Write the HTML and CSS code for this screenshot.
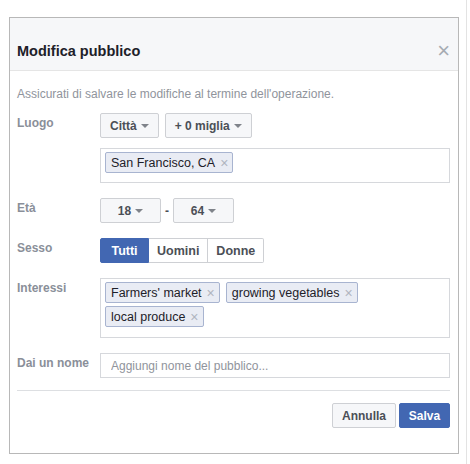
FILE: index.html
```html
<!DOCTYPE html>
<html>
<head>
  <title>Modifica pubblico</title>
  <link rel="stylesheet" href="styles.css">
</head>
<body>
  <div class="page">
  <div class="dialog">
    <div class="dialog-header">
      <h1>Modifica pubblico</h1>
      <span class="close">&times;</span>
    </div>
    <div class="dialog-body">
      <p class="hint">Assicurati di salvare le modifiche al termine dell'operazione.</p>

      <div class="row">
        <label>Luogo</label>
        <div class="controls">
          <div class="inline">
            <button class="btn">Città <span class="caret"></span></button>
            <button class="btn">+ 0 miglia <span class="caret"></span></button>
          </div>
          <div class="token-box loc">
            <span class="token">San Francisco, CA <span class="x">&times;</span></span>
          </div>
        </div>
      </div>

      <div class="row age">
        <label>Età</label>
        <div class="controls inline">
          <button class="btn num">18 <span class="caret"></span></button>
          <span class="dash">-</span>
          <button class="btn num">64 <span class="caret"></span></button>
        </div>
      </div>

      <div class="row sex">
        <label>Sesso</label>
        <div class="controls">
          <div class="segmented">
            <button class="seg active">Tutti</button>
            <button class="seg">Uomini</button>
            <button class="seg">Donne</button>
          </div>
        </div>
      </div>

      <div class="row interests">
        <label>Interessi</label>
        <div class="controls">
          <div class="token-box">
            <span class="token">Farmers' market <span class="x">&times;</span></span>
            <span class="token">growing vegetables <span class="x">&times;</span></span>
            <span class="token">local produce <span class="x">&times;</span></span>
          </div>
        </div>
      </div>

      <div class="row name">
        <label>Dai un nome</label>
        <div class="controls">
          <input type="text" placeholder="Aggiungi nome del pubblico...">
        </div>
      </div>

      <div class="footer">
        <button class="btn cancel">Annulla</button>
        <button class="btn primary">Salva</button>
      </div>
    </div>
  </div>
  </div>
</body>
</html>
```

FILE: styles.css
```css
body {
  margin: 0;
  font-family: "Liberation Sans", Arial, sans-serif;
  color: #1d2129;
  background: #fff;
}

.page {
  width: 467px;
  height: 464px;
  border-right: 1px solid #e3e3e3;
  padding: 17px 0 0 9px;
  box-sizing: border-box;
}

.dialog {
  width: 450px;
  height: 437px;
  box-sizing: border-box;
  border: 1px solid #b8b8b8;
  background: #fff;
}

.dialog-header {
  height: 53px;
  background: #f6f7f9;
  border-bottom: 1px solid #e5e5e5;
  display: flex;
  align-items: center;
  justify-content: space-between;
  padding: 14px 8px 0 7px;
  box-sizing: border-box;
}

.dialog-header h1 {
  margin: 0;
  font-size: 14.5px;
  font-weight: bold;
  color: #1d2129;
}

.close {
  color: #a7abb2;
  font-size: 22px;
  line-height: 1;
  font-weight: normal;
}

.dialog-body {
  padding: 15px 8px 0 7px;
}

.hint {
  margin: 0 0 11px;
  font-size: 12px;
  line-height: 16px;
  color: #90949c;
}

.row {
  display: flex;
  margin-bottom: 15px;
}

.row label {
  width: 83px;
  flex: none;
  font-size: 12px;
  font-weight: bold;
  color: #8a8f99;
  padding-top: 3px;
}

.controls {
  flex: 1;
}

.inline {
  display: flex;
  align-items: center;
  gap: 6px;
}

.btn {
  height: 25px;
  padding: 0 9px;
  border: 1px solid #ced0d4;
  border-radius: 2px;
  background: #f6f7f9;
  font-family: inherit;
  font-size: 12px;
  font-weight: bold;
  color: #4b4f56;
  display: inline-flex;
  align-items: center;
  gap: 4px;
}

.caret {
  width: 0;
  height: 0;
  border-left: 4px solid transparent;
  border-right: 4px solid transparent;
  border-top: 4px solid #7f838a;
  margin-top: 1px;
}

.age.row .controls {
  gap: 4px;
}

.btn.num {
  width: 61px;
  justify-content: center;
}

.dash {
  font-size: 12px;
  color: #4b4f56;
  font-weight: bold;
}

.token-box {
  border: 1px solid #d6d8dc;
  padding: 3px 4px;
  display: flex;
  flex-wrap: wrap;
  gap: 3px 6px;
  box-sizing: border-box;
}

.token-box.loc {
  margin-top: 10px;
  height: 35px;
}

.token {
  display: inline-flex;
  align-items: center;
  height: 21px;
  padding: 0 4px 0 5px;
  background: #e9ecf4;
  border: 1px solid #a8b4d0;
  border-radius: 2px;
  font-size: 12.5px;
  color: #1d2129;
  box-sizing: border-box;
}

.token .x {
  color: #b0b5c0;
  font-size: 14px;
  margin-left: 5px;
}

.interests .token-box {
  height: 60px;
  align-content: flex-start;
}

.segmented {
  display: inline-flex;
}

.seg {
  height: 25px;
  padding: 0 8px;
  border: 1px solid #ced0d4;
  border-left: none;
  background: #fff;
  font-family: inherit;
  font-size: 12.5px;
  font-weight: bold;
  color: #4b4f56;
}

.seg:first-child {
  border-left: 1px solid #ced0d4;
  border-radius: 2px 0 0 2px;
}

.seg:last-child {
  border-radius: 0 2px 2px 0;
}

.seg.active {
  width: 49px;
  background: #4267b2;
  border-color: #4267b2;
  color: #fff;
}

.name input {
  width: 100%;
  height: 25px;
  box-sizing: border-box;
  border: 1px solid #d6d8dc;
  padding: 0 10px;
  font-family: inherit;
  font-size: 12px;
  color: #1d2129;
}

.name input::placeholder {
  color: #90949c;
}

.name {
  margin-bottom: 12px;
}

.footer {
  border-top: 1px solid #dddfe2;
  padding-top: 12px;
  display: flex;
  justify-content: flex-end;
  gap: 3px;
}

.btn.cancel {
  padding: 0 9px;
}

.btn.primary {
  width: 51px;
  justify-content: center;
  background: #4267b2;
  border-color: #4267b2;
  color: #fff;
}
```
